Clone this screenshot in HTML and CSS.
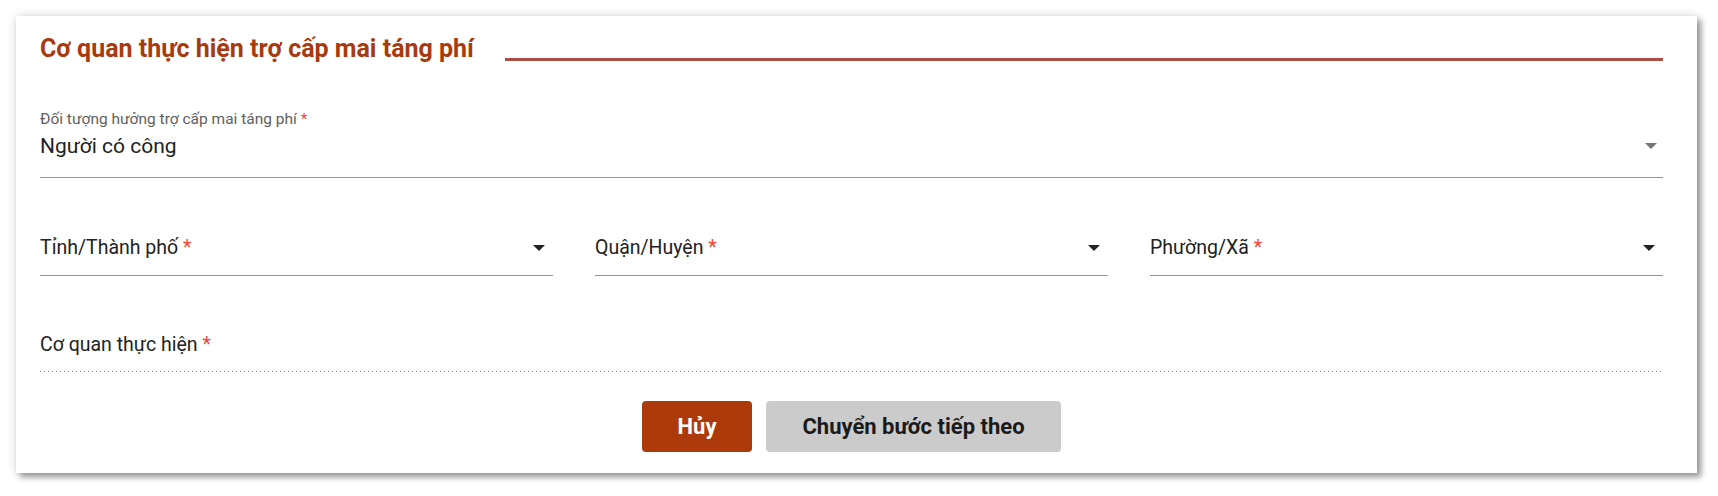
FILE: index.html
```html
<!DOCTYPE html>
<html lang="vi">
<head>
    <meta charset="UTF-8">
    <meta name="viewport" content="width=device-width, initial-scale=1.0">
    <title>Cơ quan thực hiện trợ cấp mai táng phí</title>
    <link rel="stylesheet" href="styles.css">
</head>
<body>
    <div class="card">
        <div class="section-title">
            <h2>Cơ quan thực hiện trợ cấp mai táng phí</h2>
            <span class="title-line"></span>
        </div>

        <div class="field field-filled">
            <label>Đối tượng hưởng trợ cấp mai táng phí <span class="req">*</span></label>
            <div class="select-value">
                <span>Người có công</span>
                <span class="arrow gray"></span>
            </div>
        </div>

        <div class="row">
            <div class="field">
                <div class="select-value">
                    <span>Tỉnh/Thành phố <span class="req">*</span></span>
                    <span class="arrow"></span>
                </div>
            </div>
            <div class="field">
                <div class="select-value">
                    <span>Quận/Huyện <span class="req">*</span></span>
                    <span class="arrow"></span>
                </div>
            </div>
            <div class="field">
                <div class="select-value">
                    <span>Phường/Xã <span class="req">*</span></span>
                    <span class="arrow"></span>
                </div>
            </div>
        </div>

        <div class="field field-disabled">
            <div class="select-value">
                <span>Cơ quan thực hiện <span class="req">*</span></span>
            </div>
        </div>

        <div class="actions">
            <button class="btn btn-cancel">Hủy</button>
            <button class="btn btn-next">Chuyển bước tiếp theo</button>
        </div>
    </div>
</body>
</html>
```

FILE: styles.css
```css
body {
    margin: 0;
    padding: 16px 0 23px 16px;
    background: #fff;
    font-family: Roboto, "Noto Sans", Arial, sans-serif;
    color: #222;
}

.card {
    box-sizing: border-box;
    width: 1681px;
    padding: 18px 34px 21px 24px;
    background: #fff;
    box-shadow: 4px 4px 6px rgba(0, 0, 0, 0.38), 0 0 10px rgba(0, 0, 0, 0.15);
}

.section-title {
    display: flex;
    align-items: flex-end;
    height: 30px;
}

.section-title h2 {
    margin: 0;
    font-size: 25px;
    line-height: 30px;
    font-weight: 700;
    color: #a83a10;
    white-space: nowrap;
}

.title-line {
    flex: 1;
    height: 3px;
    margin: 0 0 3px 31px;
    background: #ad4e42;
}

.field {
    border-bottom: 1px solid rgba(0, 0, 0, 0.42);
    padding-bottom: 15px;
}

.field label {
    display: block;
    font-size: 15.5px;
    line-height: 16px;
    color: #5f5f5f;
}

.req {
    color: #f44336;
}

.select-value {
    display: flex;
    justify-content: space-between;
    align-items: center;
    font-size: 19.5px;
    line-height: 24px;
}

.arrow {
    width: 0;
    height: 0;
    margin-right: 8px;
    border-left: 6px solid transparent;
    border-right: 6px solid transparent;
    border-top: 6px solid #222;
}

.arrow.gray {
    margin-right: 6px;
    border-top-color: #757575;
}

.field-filled {
    margin-top: 47px;
    padding-bottom: 18px;
}

.field-filled .select-value {
    margin-top: 6px;
    font-size: 21px;
    line-height: 26px;
}

.row {
    display: grid;
    grid-template-columns: 1fr 1fr 1fr;
    gap: 42px;
    margin-top: 58px;
}

.field-disabled {
    margin-top: 57px;
    padding-bottom: 14px;
    border-bottom: none;
    background: linear-gradient(to right, rgba(0, 0, 0, 0.5) 0, rgba(0, 0, 0, 0.5) 33%, transparent 0) 0 100% / 4px 1px repeat-x;
}

.field-disabled .select-value {
    padding-bottom: 1px;
}

.actions {
    display: flex;
    justify-content: center;
    gap: 14px;
    margin-top: 29px;
}

.btn {
    height: 51px;
    border: none;
    border-radius: 4px;
    font-family: Roboto, Arial, sans-serif;
    font-size: 22px;
    font-weight: 700;
    cursor: pointer;
}

.btn-cancel {
    width: 110px;
    background: #ad3a0a;
    color: #fff;
}

.btn-next {
    width: 295px;
    background: #cbcbcb;
    color: #1a1a1a;
}
```
